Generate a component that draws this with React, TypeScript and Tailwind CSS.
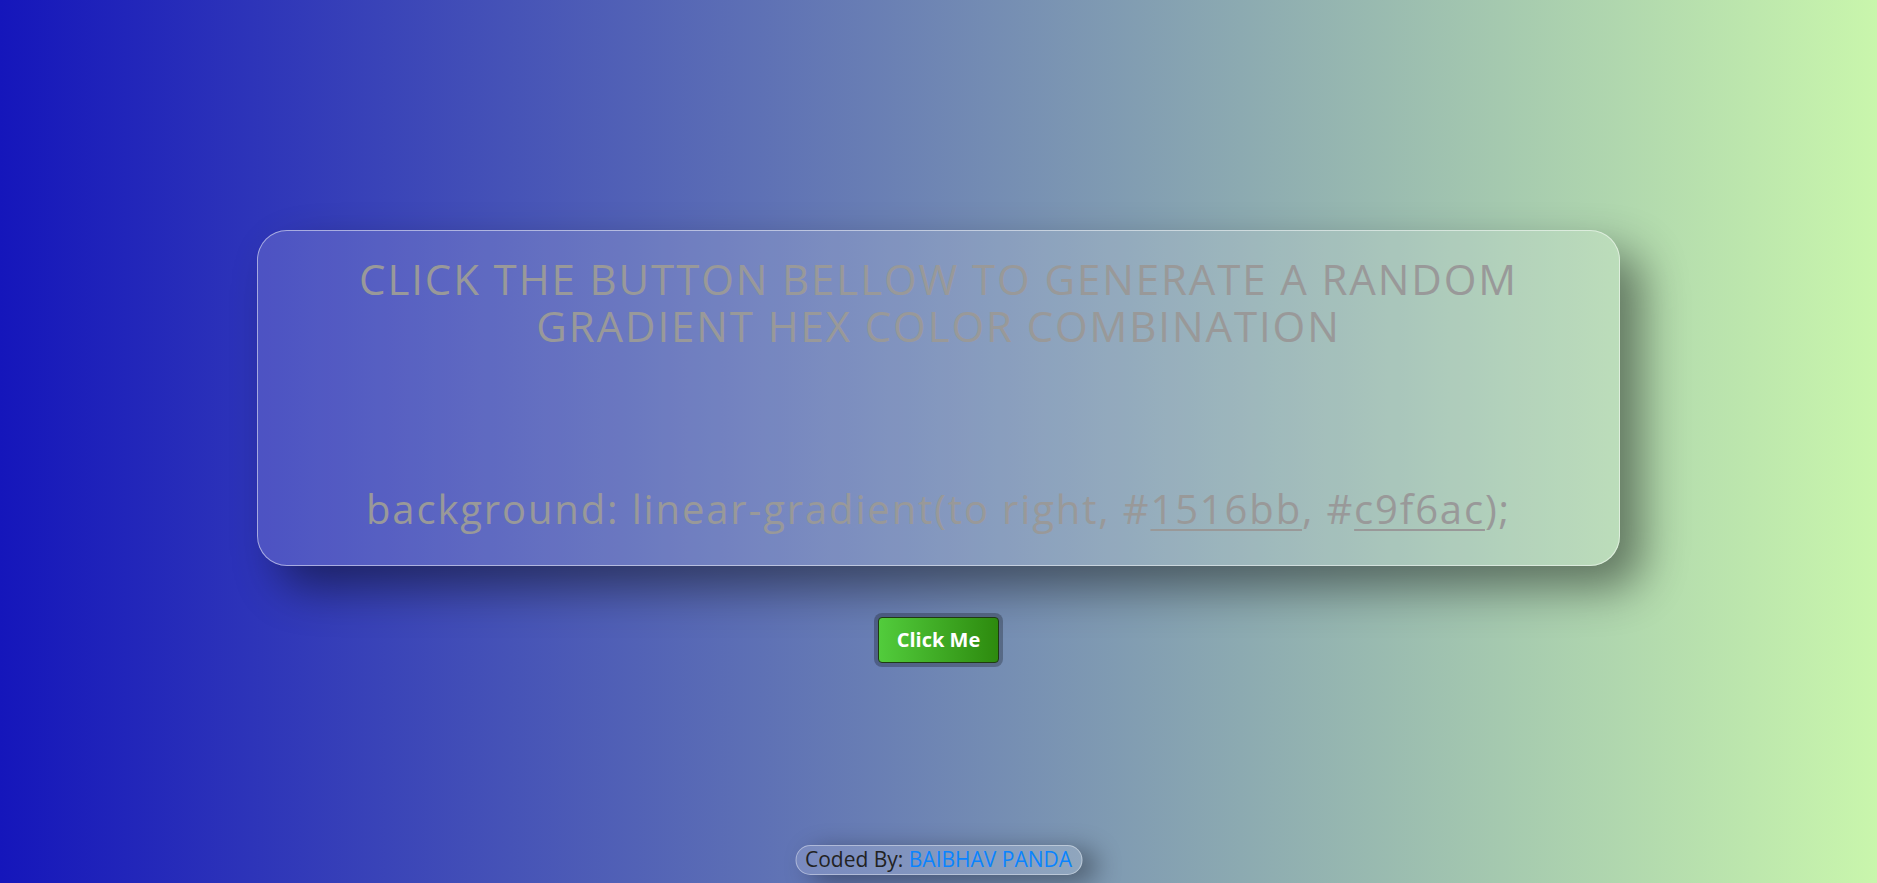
const font = { fontFamily: '"Open Sans", Lato, sans-serif' }

const App = () => {
  const from = '#1516bb'
  const to = '#c9f6ac'

  return (
    <div
      className="relative h-screen w-full overflow-hidden bg-[linear-gradient(to_right,#1516bb,#c9f6ac)]"
      style={font}
    >
      <div className="flex flex-col items-center pt-[230px]">
        {/* Card */}
        <div className="flex h-[336px] w-[1363px] flex-col items-center justify-between rounded-[30px] border border-white/50 bg-white/15 pt-[24px] pb-[32px] text-center text-[#999] shadow-[22px_22px_45px_rgba(0,0,0,0.45)]">
          <h1 className="text-[42px] leading-[47px] font-normal uppercase tracking-[1.9px]">
            Click the button bellow to generate a random
            <br />
            gradient hex color combination
          </h1>
          <p className="text-[40px] leading-[48px] tracking-[1.85px]">
            background: linear-gradient(to right, #
            <a className="underline decoration-2 underline-offset-[5px]">{from.slice(1)}</a>
            , #
            <a className="underline decoration-2 underline-offset-[5px]">{to.slice(1)}</a>
            );
          </p>
        </div>

        {/* Button */}
        <div className="mt-[47px] rounded-[8px] bg-black/25 p-[4px]">
          <button className="h-[46px] w-[121px] rounded-[4px] border border-[#1f3a12] bg-[linear-gradient(to_right,#52cc3c,#2d8a0e)] text-[20px] font-bold text-white">
            Click Me
          </button>
        </div>
      </div>

      {/* Footer */}
      <div className="absolute bottom-[8px] left-1/2 flex h-[30px] w-[287px] -translate-x-1/2 items-center justify-center rounded-full border border-white/40 bg-white/15 text-[21px] shadow-[14px_6px_26px_rgba(0,0,0,0.4)]">
        <span className="text-[#222]">Coded By:&nbsp;</span>
        <span className="text-[#0a84ff]">BAIBHAV PANDA</span>
      </div>
    </div>
  )
}

export default App
